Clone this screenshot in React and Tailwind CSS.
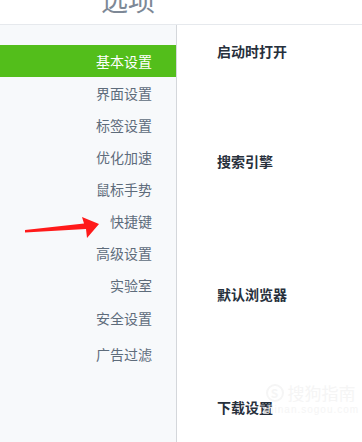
const items = [
    {label: "基本设置", h: "h-[32px]", active: true},
    {label: "界面设置", h: "h-[32px]"},
    {label: "标签设置", h: "h-[32px]"},
    {label: "优化加速", h: "h-[32px]"},
    {label: "鼠标手势", h: "h-[32px]"},
    {label: "快捷键", h: "h-[32px]"},
    {label: "高级设置", h: "h-[32px]"},
    {label: "实验室", h: "h-[32px]"},
    {label: "安全设置", h: "h-[34px]"},
    {label: "广告过滤", h: "h-[38px]"},
]

const sections = [
    {title: "启动时打开", h: "h-[110px]"},
    {title: "搜索引擎", h: "h-[133px]"},
    {title: "默认浏览器", h: "h-[113px]"},
    {title: "下载设置", h: "h-[60px]"},
]

function Arrow() {
    return (
        <svg className="absolute left-0 top-0" width="110" height="250" viewBox="0 0 110 250">
            <polygon
                points="25,230 84,223.5 82,217 99,224 87,238 86,229 25,232.5"
                fill="#ff1a1a"
            />
        </svg>
    )
}

export default function App() {
    return (
        <div
            className="relative w-[362px] h-[442px] overflow-hidden bg-white"
            style={{fontFamily: '"Microsoft YaHei", "Noto Sans CJK SC", sans-serif'}}
        >
            <div className="h-[24px] overflow-hidden border-b border-[#e6e9ed] box-content flex pl-[101px]">
                <div className="-mt-[14px] text-[27px] leading-[28px] text-[#7d8896]">选项</div>
            </div>

            <div className="flex h-[417px]">
                <div className="w-[177px] shrink-0 bg-[#f7f9fb] border-r border-[#d4d7db] pt-[20px]">
                    {items.map((it) => (
                        <div
                            key={it.label}
                            className={`${it.h} flex items-center justify-end pr-[24px] text-[14px] ${
                                it.active ? "bg-[#53be1b] text-white" : "text-[#5e6c7b]"
                            }`}
                        >
                            {it.label}
                        </div>
                    ))}
                </div>

                <div className="flex-1 pl-[40px] pt-[17px]">
                    {sections.map((s) => (
                        <div key={s.title} className={`${s.h} text-[14px] font-bold text-[#27303c] leading-[18px]`}>
                            {s.title}
                        </div>
                    ))}
                </div>
            </div>

            <Arrow/>

            <div className="absolute left-[262px] top-[383px] flex flex-col items-center text-[#f5f5f5]">
                <div className="flex items-center gap-[4px] text-[17px] leading-[20px]">
                    <span className="w-[18px] h-[18px] rounded-full border-2 border-[#f5f5f5] text-[12px] leading-[14px] text-center font-bold">S</span>
                    搜狗指南
                </div>
                <div className="text-[10px] leading-[14px] tracking-[1px]" style={{fontFamily: '"Liberation Sans", sans-serif'}}>zhinan.sogou.com</div>
            </div>
        </div>
    )
}
